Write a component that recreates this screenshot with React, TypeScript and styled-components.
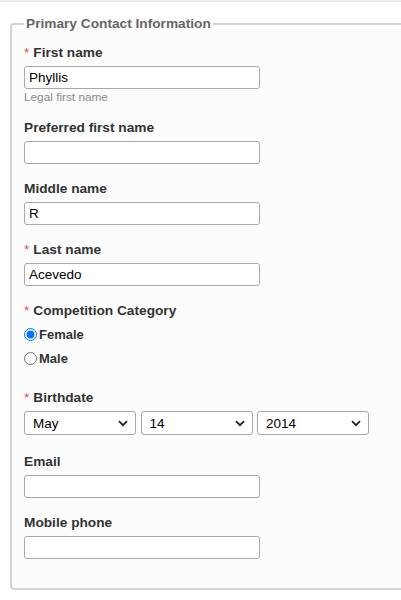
import React from "react";
import styled, { createGlobalStyle } from "styled-components";

const GlobalStyle = createGlobalStyle`
  html, body {
    margin: 0;
    padding: 0;
    background: #ffffff;
    overflow: hidden;
  }
  body {
    font-family: "Liberation Sans", Arial, sans-serif;
    color: #333;
  }
`;

const TopStrip = styled.div`
  height: 2px;
  background: #e6e9ed;
`;

const Page = styled.div`
  padding: 14px 0 0 10px;
  overflow: hidden;
`;

const Fieldset = styled.fieldset`
  margin: 0 -30px 0 0;
  padding: 13px 12px 29px 12px;
  border: 2px solid #d2d2d2;
  border-radius: 4px;
  background: #fcfcfc;
  min-width: 0;
`;

const Legend = styled.legend`
  padding: 0 2px;
  margin-left: 0;
  font-size: 13.7px;
  font-weight: bold;
  line-height: 16px;
  color: #666;
`;

interface FieldProps {
  gap?: number;
}
const Field = styled.div<FieldProps>`
  margin-bottom: ${(p) => (p.gap !== undefined ? p.gap : 17)}px;
`;

const Label = styled.label`
  display: block;
  font-size: 13.7px;
  font-weight: bold;
  line-height: 16px;
  color: #333;
  margin-bottom: 5px;
`;

const Req = styled.span`
  color: #d9534f;
  font-weight: normal;
  margin-right: 4px;
`;

const TextBox = styled.input`
  box-sizing: border-box;
  display: block;
  width: 236px;
  height: 23px;
  margin: 0;
  padding: 1px 4px;
  border: 1px solid #a9a9a9;
  border-radius: 3px;
  background: #fff;
  font-family: "Liberation Sans", Arial, sans-serif;
  font-size: 13.5px;
  color: #000;
  outline: none;
`;

const Help = styled.div`
  font-size: 11.8px;
  line-height: 13px;
  color: #8a8a8a;
  margin-top: 2px;
`;

const RadioGroup = styled.div`
  display: flex;
  flex-direction: column;
  margin-top: -2px;
`;

const RadioRow = styled.label`
  display: flex;
  align-items: center;
  height: 24px;
  font-size: 13px;
  font-weight: bold;
  color: #333;

  input {
    width: 13px;
    height: 13px;
    margin: 0 2px 0 0;
  }
`;

const SelectRow = styled.div`
  display: flex;
  gap: 4.5px;
`;

const SelectWrap = styled.div`
  position: relative;
  width: 112px;

  svg {
    position: absolute;
    right: 8px;
    top: 9px;
    pointer-events: none;
  }
`;

const Select = styled.select`
  appearance: none;
  -webkit-appearance: none;
  box-sizing: border-box;
  display: block;
  width: 100%;
  height: 24px;
  margin: 0;
  padding: 0 24px 0 8px;
  border: 1px solid #a9a9a9;
  border-radius: 3px;
  background: #fff;
  font-family: "Liberation Sans", Arial, sans-serif;
  font-size: 13.5px;
  color: #000;
  outline: none;
`;

const Chevron = () => (
  <svg width="10" height="7" viewBox="0 0 10 7">
    <path d="M1 1.2 L5 5.2 L9 1.2" fill="none" stroke="#222" strokeWidth="1.8" />
  </svg>
);

interface DropdownProps {
  value: string;
  options: string[];
}
const Dropdown = ({ value, options }: DropdownProps) => (
  <SelectWrap>
    <Select defaultValue={value}>
      {options.map((o) => (
        <option key={o}>{o}</option>
      ))}
    </Select>
    <Chevron />
  </SelectWrap>
);

const months = [
  "January", "February", "March", "April", "May", "June",
  "July", "August", "September", "October", "November", "December",
];
const days = Array.from({ length: 31 }, (_, i) => String(i + 1));
const years = Array.from({ length: 30 }, (_, i) => String(2024 - i));

const App = () => {
  return (
    <>
      <GlobalStyle />
      <TopStrip />
      <Page>
        <Fieldset>
          <Legend>Primary Contact Information</Legend>

          <Field gap={16}>
            <Label>
              <Req>*</Req>First name
            </Label>
            <TextBox type="text" defaultValue="Phyllis" />
            <Help>Legal first name</Help>
          </Field>

          <Field>
            <Label>Preferred first name</Label>
            <TextBox type="text" />
          </Field>

          <Field>
            <Label>Middle name</Label>
            <TextBox type="text" defaultValue="R" />
          </Field>

          <Field>
            <Label>
              <Req>*</Req>Last name
            </Label>
            <TextBox type="text" defaultValue="Acevedo" />
          </Field>

          <Field gap={20}>
            <Label>
              <Req>*</Req>Competition Category
            </Label>
            <RadioGroup>
              <RadioRow>
                <input type="radio" name="category" defaultChecked />
                Female
              </RadioRow>
              <RadioRow>
                <input type="radio" name="category" />
                Male
              </RadioRow>
            </RadioGroup>
          </Field>

          <Field gap={19}>
            <Label>
              <Req>*</Req>Birthdate
            </Label>
            <SelectRow>
              <Dropdown value="May" options={months} />
              <Dropdown value="14" options={days} />
              <Dropdown value="2014" options={years} />
            </SelectRow>
          </Field>

          <Field>
            <Label>Email</Label>
            <TextBox type="email" />
          </Field>

          <Field gap={0}>
            <Label>Mobile phone</Label>
            <TextBox type="tel" />
          </Field>
        </Fieldset>
      </Page>
    </>
  );
};

export default App;
